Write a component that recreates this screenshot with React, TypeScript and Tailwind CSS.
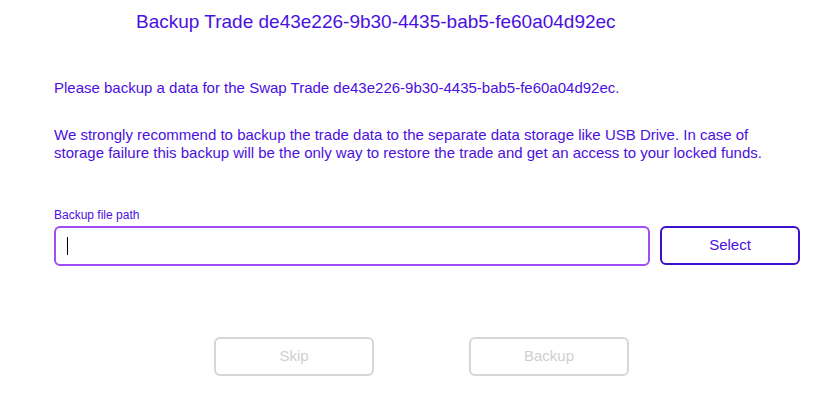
export default function App() {
  return (
    <div
      className="w-[836px] h-[408px] bg-white text-[#4a10e0]"
      style={{ fontFamily: '"Liberation Sans", Arial, sans-serif' }}
    >
      <h1 className="pt-[11px] pl-[136px] text-[19px] leading-[22px]">
        Backup Trade de43e226-9b30-4435-bab5-fe60a04d92ec
      </h1>

      <div className="pl-[54px] pr-[36px]">
        <p className="mt-[46px] text-[15px] leading-[18px]">
          Please backup a data for the Swap Trade de43e226-9b30-4435-bab5-fe60a04d92ec.
        </p>
        <p className="mt-[29px] w-[740px] text-[15px] leading-[18px]">
          We strongly recommend to backup the trade data to the separate data storage like USB Drive. In case of
          storage failure this backup will be the only way to restore the trade and get an access to your locked funds.
        </p>

        <label className="block mt-[46px] text-[12px] leading-[14px]">Backup file path</label>
        <div className="mt-[4px] flex gap-[10px]">
          <div className="w-[596px] h-[40px] shrink-0 rounded-[6px] border-2 border-[#a24cf7] flex items-center pl-[11px]">
            <span className="w-px h-[18px] bg-black" />
          </div>
          <button className="w-[140px] h-[39px] shrink-0 rounded-[6px] border-2 border-[#3d10cc] text-[15px] text-[#4a10e0]">
            Select
          </button>
        </div>

        <div className="mt-[71px] flex pl-[160px] gap-[95px]">
          <button
            disabled
            className="w-[160px] h-[39px] rounded-[6px] border-2 border-[#d6d6d6] text-[15px] text-[#cfcfcf]"
          >
            Skip
          </button>
          <button
            disabled
            className="w-[160px] h-[39px] rounded-[6px] border-2 border-[#d6d6d6] text-[15px] text-[#cfcfcf]"
          >
            Backup
          </button>
        </div>
      </div>
    </div>
  );
}
